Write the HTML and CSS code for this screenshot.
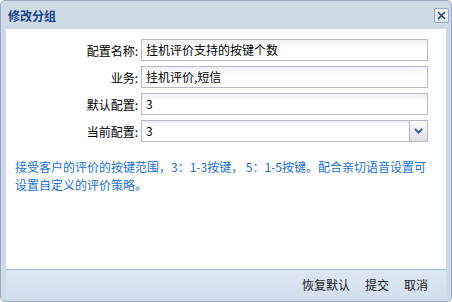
FILE: index.html
```html
<!DOCTYPE html>
<html lang="zh-CN">
<head>
    <meta charset="UTF-8">
    <title>修改分组</title>
    <link rel="stylesheet" href="styles.css">
</head>
<body>
    <div class="window">
        <div class="header">
            <span class="title">修改分组</span>
            <span class="close">
                <svg width="9" height="9" viewBox="0 0 9 9"><path d="M1 1L8 8M8 1L1 8" stroke="#15428b" stroke-width="1.6"/></svg>
            </span>
        </div>
        <div class="body">
            <div class="form">
                <div class="row">
                    <label>配置名称:</label>
                    <div class="field">挂机评价支持的按键个数</div>
                </div>
                <div class="row">
                    <label>业务:</label>
                    <div class="field">挂机评价,短信</div>
                </div>
                <div class="row">
                    <label>默认配置:</label>
                    <div class="field">3</div>
                </div>
                <div class="row">
                    <label>当前配置:</label>
                    <div class="field combo">
                        <span class="value">3</span>
                        <span class="trigger">
                            <svg width="9" height="6" viewBox="0 0 9 6"><path d="M1 1L4.5 4.5L8 1" stroke="#3a5f9e" stroke-width="2" fill="none"/></svg>
                        </span>
                    </div>
                </div>
            </div>
            <p class="hint">接受客户的评价的按键范围，3：1-3按键， 5：1-5按键。配合亲切语音设置可设置自定义的评价策略。</p>
        </div>
        <div class="footer">
            <button>恢复默认</button>
            <button>提交</button>
            <button>取消</button>
        </div>
    </div>
</body>
</html>
```

FILE: styles.css
```css
body {
    margin: 0;
    font-family: "Noto Sans CJK SC", "Liberation Sans", sans-serif;
    font-size: 12px;
    background: #fff;
}
.window {
    width: 440px;
    height: 298px;
    border: 1px solid #99a9c3;
    border-radius: 5px;
    background: #cfdae7;
    display: flex;
    flex-direction: column;
    padding: 0 5px 2px;
    box-sizing: content-box;
}
.header {
    height: 28px;
    display: flex;
    align-items: center;
    justify-content: space-between;
    padding-left: 2px;
}
.title {
    color: #15428b;
    font-weight: bold;
    font-size: 12px;
}
.close {
    width: 13px;
    height: 13px;
    border: 1px solid #8fa9cf;
    border-radius: 2px;
    background: linear-gradient(#ffffff, #dfe8f5);
    display: flex;
    align-items: center;
    justify-content: center;
    margin-right: -3px;
}
.body {
    flex: 1;
    background: #fff;
    border-bottom: 1px solid #99bbe8;
}
.form {
    display: flex;
    flex-direction: column;
    gap: 5px;
    padding-top: 10px;
}
.row {
    display: flex;
    align-items: center;
}
.row label {
    width: 132px;
    text-align: right;
    padding-right: 3px;
    color: #000;
}
.field {
    width: 281px;
    height: 20px;
    border: 1px solid #b5b8c8;
    background: linear-gradient(#eef0f3, #ffffff 8px);
    line-height: 20px;
    padding-left: 4px;
    box-sizing: content-box;
}
.combo {
    display: flex;
    justify-content: space-between;
    padding-left: 0;
    width: 285px;
}
.combo .value {
    padding-left: 4px;
}
.trigger {
    width: 17px;
    border-left: 1px solid #b5b8c8;
    background: linear-gradient(#fbfbfc, #dde1e6);
    display: flex;
    align-items: center;
    justify-content: center;
}
.hint {
    margin: 16px 10px 0 9px;
    color: #1a6fd8;
    font-size: 12px;
    line-height: 18px;
}
.footer {
    height: 29px;
    display: flex;
    justify-content: flex-end;
    align-items: center;
    gap: 15px;
    padding-right: 18px;
    background: linear-gradient(#dce7f4, #d2dfee);
}
.footer button {
    border: none;
    background: none;
    padding: 0;
    font-family: inherit;
    font-size: 12px;
    color: #222;
}
```
